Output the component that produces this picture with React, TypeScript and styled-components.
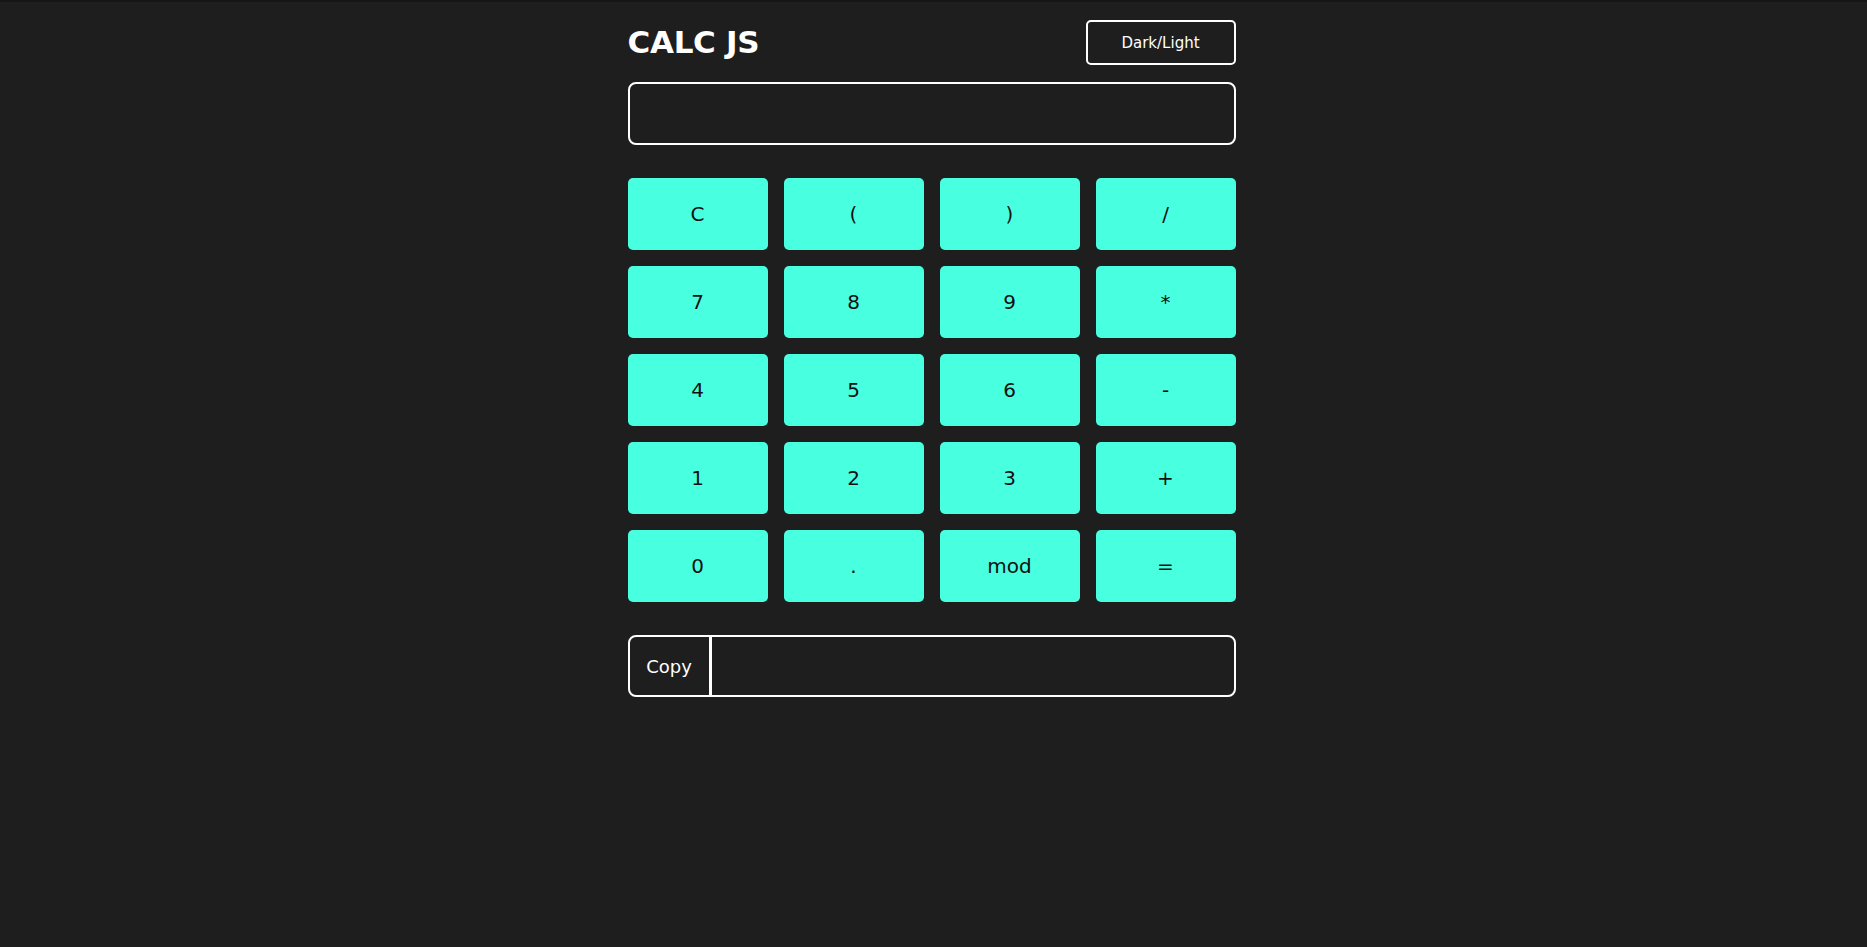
import React, { useState } from "react";
import styled, { createGlobalStyle } from "styled-components";

const GlobalStyle = createGlobalStyle`
  html, body {
    margin: 0;
    padding: 0;
  }
  body {
    background: #1e1e1e;
    border-top: 2px solid #161616;
    min-height: 100vh;
    box-sizing: border-box;
    font-family: "DejaVu Sans", "Liberation Sans", sans-serif;
  }
  * { box-sizing: border-box; }
`;

const Container = styled.main`
  width: 608px;
  margin-left: calc(50% - 306px);
  padding-top: 18px;
  display: flex;
  flex-direction: column;
`;

const Header = styled.header`
  display: flex;
  align-items: center;
  justify-content: space-between;
  height: 45px;
`;

const Title = styled.h1`
  margin: 0;
  color: #ffffff;
  font-family: "DejaVu Sans", sans-serif;
  font-weight: 700;
  font-size: 31px;
  letter-spacing: -0.3px;
  line-height: 1;
`;

const ToggleButton = styled.button`
  width: 150px;
  height: 45px;
  background: transparent;
  border: 2px solid #ffffff;
  border-radius: 5px;
  color: #ffffff;
  font-family: "DejaVu Sans", sans-serif;
  font-size: 15px;
  cursor: pointer;
`;

const Display = styled.input`
  margin-top: 17px;
  width: 100%;
  height: 63px;
  background: transparent;
  border: 2px solid #ffffff;
  border-radius: 8px;
  color: #ffffff;
  font-family: "DejaVu Sans", sans-serif;
  font-size: 24px;
  padding: 0 16px;
  outline: none;
`;

const Keypad = styled.section`
  margin-top: 33px;
  display: grid;
  grid-template-columns: repeat(4, 1fr);
  grid-auto-rows: 72px;
  gap: 16px;
`;

const Key = styled.button`
  background: #48ffe0;
  border: none;
  border-radius: 5px;
  color: #111111;
  font-family: "DejaVu Sans", sans-serif;
  font-size: 20px;
  cursor: pointer;
  display: flex;
  align-items: center;
  justify-content: center;
`;

const CopyRow = styled.div`
  margin-top: 33px;
  height: 62px;
  display: flex;
  border: 2px solid #ffffff;
  border-radius: 8px;
  overflow: hidden;
`;

const CopyButton = styled.button`
  width: 82px;
  background: transparent;
  border: none;
  border-right: 3px solid #ffffff;
  color: #ffffff;
  font-family: "DejaVu Sans", sans-serif;
  font-size: 18px;
  padding: 0;
  cursor: pointer;
`;

const CopyField = styled.input`
  flex: 1;
  background: transparent;
  border: none;
  color: #ffffff;
  font-family: "DejaVu Sans", sans-serif;
  font-size: 18px;
  padding: 0 16px;
  outline: none;
`;

const keys = [
  "C", "(", ")", "/",
  "7", "8", "9", "*",
  "4", "5", "6", "-",
  "1", "2", "3", "+",
  "0", ".", "mod", "=",
];

export default function App() {
  const [expr, setExpr] = useState("");
  const [result, setResult] = useState("");

  const press = (k: string) => {
    if (k === "C") {
      setExpr("");
      setResult("");
      return;
    }
    if (k === "=") {
      try {
        const src = expr.replace(/mod/g, "%");
        // eslint-disable-next-line no-new-func
        const v = Function(`"use strict"; return (${src || 0});`)();
        setResult(String(v));
        setExpr(String(v));
      } catch {
        setResult("Error");
      }
      return;
    }
    setExpr((e) => e + k);
  };

  return (
    <>
      <GlobalStyle />
      <Container>
        <Header>
          <Title>CALC JS</Title>
          <ToggleButton>Dark/Light</ToggleButton>
        </Header>
        <Display value={expr} readOnly aria-label="display" />
        <Keypad>
          {keys.map((k) => (
            <Key key={k} onClick={() => press(k)}>
              {k}
            </Key>
          ))}
        </Keypad>
        <CopyRow>
          <CopyButton>Copy</CopyButton>
          <CopyField value={result} readOnly aria-label="result" />
        </CopyRow>
      </Container>
    </>
  );
}
